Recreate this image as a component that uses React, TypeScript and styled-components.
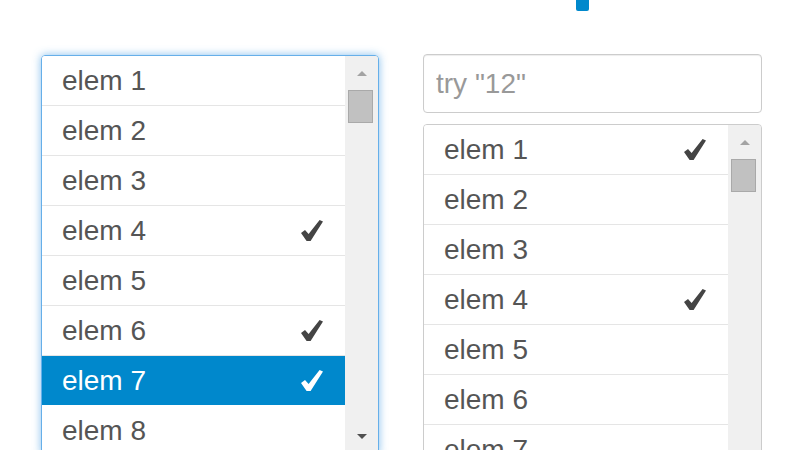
import React from 'react'
import styled, { createGlobalStyle } from 'styled-components'

const GlobalStyle = createGlobalStyle`
  html, body {
    margin: 0;
    padding: 0;
    background: #fff;
    overflow: hidden;
  }
  body {
    font-family: "Liberation Sans", Arial, sans-serif;
  }
`

const Page = styled.div`
  width: 800px;
  height: 450px;
  padding-left: 41px;
  box-sizing: border-box;
  overflow: hidden;
`

const Header = styled.div`
  height: 12px;
  display: flex;
  padding-left: 535px;
  margin-bottom: 43px;
`

const TitleTail = styled.span`
  width: 13px;
  height: 11px;
  background: #0088cc;
  border-radius: 0 0 2px 2px;
`

const Columns = styled.div`
  display: flex;
  align-items: flex-start;
  gap: 44px;
`

const Column = styled.div<{ $shift?: number }>`
  width: 338px;
  display: flex;
  flex-direction: column;
  gap: 11px;
  margin-top: ${(p) => p.$shift || 0}px;
`

const SearchInput = styled.input`
  box-sizing: border-box;
  width: 339px;
  height: 59px;
  padding: 0 12px;
  border: 1px solid #ccc;
  border-radius: 4px;
  box-shadow: inset 0 1px 1px rgba(0, 0, 0, 0.075);
  font-family: "Liberation Sans", Arial, sans-serif;
  font-size: 28px;
  color: #555;
  outline: none;
  &::placeholder {
    color: #999;
  }
`

const ListBox = styled.div<{ $focused?: boolean; $height: number; $width: number }>`
  box-sizing: border-box;
  width: ${(p) => p.$width}px;
  height: ${(p) => p.$height}px;
  display: flex;
  border: 1px solid ${(p) => (p.$focused ? '#66afe9' : '#ccc')};
  border-radius: 4px;
  overflow: hidden;
  box-shadow: ${(p) =>
    p.$focused
      ? 'inset 0 1px 1px rgba(0,0,0,.075), 0 0 9px rgba(102,175,233,.8)'
      : 'inset 0 1px 1px rgba(0,0,0,.075)'};
`

const Rows = styled.ul`
  flex: 1;
  margin: 0;
  padding: 0;
  list-style: none;
  overflow: hidden;
`

const Row = styled.li<{ $selected?: boolean }>`
  height: 49px;
  display: flex;
  align-items: center;
  justify-content: space-between;
  padding: 0 22px 0 20px;
  border-bottom: 1px solid ${(p) => (p.$selected ? '#fff' : '#e5e5e5')};
  background: ${(p) => (p.$selected ? '#0088cc' : '#fff')};
  color: ${(p) => (p.$selected ? '#fff' : '#555')};
  font-size: 28px;
  line-height: 49px;
  white-space: nowrap;
`

const Track = styled.div`
  width: 33px;
  flex: 0 0 33px;
  background: #f0f0f0;
  display: flex;
  flex-direction: column;
  align-items: center;
  padding: 15px 0 15px;
  box-sizing: border-box;
`

const ArrowUp = styled.div<{ $color: string }>`
  width: 0;
  height: 0;
  border-left: 5px solid transparent;
  border-right: 5px solid transparent;
  border-bottom: 5px solid ${(p) => p.$color};
`

const ArrowDown = styled.div<{ $color: string }>`
  width: 0;
  height: 0;
  margin-top: auto;
  border-left: 5px solid transparent;
  border-right: 5px solid transparent;
  border-top: 5px solid ${(p) => p.$color};
`

const Thumb = styled.div`
  box-sizing: border-box;
  width: 25px;
  height: 33px;
  margin-top: 14px;
  margin-left: -2px;
  background: #c1c1c1;
  border: 1px solid #a9a9a9;
`

function Check({ color }: { color: string }) {
  return (
    <svg width="22" height="21" viewBox="0 0 22 21">
      <polygon
        points="0,13 4,10 7.6,14 18.6,0 22,1.4 9.6,21 5.6,21"
        fill={color}
      />
    </svg>
  )
}

type Item = { label: string; checked?: boolean; selected?: boolean }

function MultiList({
  items,
  focused,
  height,
  width,
  showDown,
}: {
  items: Item[]
  focused?: boolean
  height: number
  width: number
  showDown?: boolean
}) {
  return (
    <ListBox $focused={focused} $height={height} $width={width}>
      <Rows>
        {items.map((it) => (
          <Row key={it.label} $selected={it.selected}>
            <span>{it.label}</span>
            {it.checked && <Check color={it.selected ? '#fff' : '#444'} />}
          </Row>
        ))}
      </Rows>
      <Track>
        <ArrowUp $color="#a3a3a3" />
        <Thumb />
        {showDown && <ArrowDown $color="#505050" />}
      </Track>
    </ListBox>
  )
}

const leftItems: Item[] = Array.from({ length: 10 }, (_, i) => ({
  label: `elem ${i + 1}`,
  checked: [4, 6, 7].includes(i + 1),
  selected: i + 1 === 7,
}))

const rightItems: Item[] = Array.from({ length: 12 }, (_, i) => ({
  label: `elem ${i + 1}`,
  checked: [1, 4].includes(i + 1),
}))

export default function App() {
  return (
    <Page>
      <GlobalStyle />
      <Header>
        <TitleTail />
      </Header>
      <Columns>
        <Column $shift={0}>
          <MultiList items={leftItems} focused height={400} width={338} showDown />
        </Column>
        <Column $shift={-1}>
          <SearchInput placeholder='try "12"' />
          <MultiList items={rightItems} height={360} width={339} />
        </Column>
      </Columns>
    </Page>
  )
}
